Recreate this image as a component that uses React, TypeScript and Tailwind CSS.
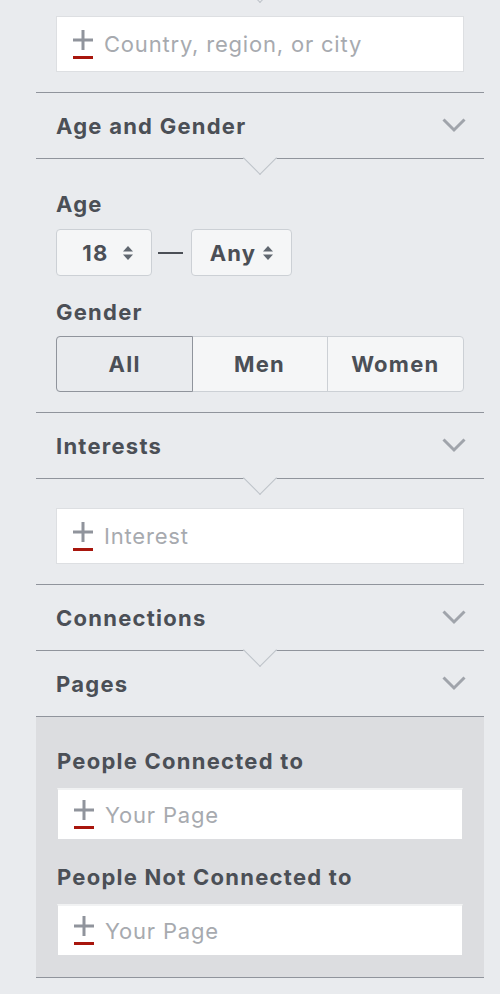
import React from 'react'

const PlusMark: React.FC = () => (
  <svg width="20" height="29" viewBox="0 0 20 29" className="shrink-0">
    <path d="M10 0 V20 M0 10 H20" stroke="#90949c" strokeWidth="3" />
    <rect x="0" y="26" width="20" height="3" fill="#a8160d" />
  </svg>
)

const Chevron: React.FC = () => (
  <svg width="24" height="15" viewBox="0 0 24 15">
    <path d="M1.5 1.5 L12 12 L22.5 1.5" fill="none" stroke="#a0a4ab" strokeWidth="3" />
  </svg>
)

const Spinner: React.FC = () => (
  <svg width="12" height="16" viewBox="0 0 12 16" className="shrink-0">
    <path d="M6 1 L11 6.5 H1 Z" fill="#606770" />
    <path d="M6 15 L11 9.5 H1 Z" fill="#606770" />
  </svg>
)

const Notch: React.FC<{ top?: boolean }> = ({ top }) => (
  <div
    className={`absolute left-1/2 z-10 h-[24px] w-[24px] -translate-x-1/2 rotate-45 border-b border-r border-[#bec3c9] bg-[#e9ebee] ${
      top ? 'top-[-26px]' : 'bottom-[-12px]'
    }`}
  ></div>
)

const SearchInput: React.FC<{ placeholder: string; tall?: boolean }> = ({ placeholder, tall }) => (
  <div
    className={`flex items-center gap-[11px] bg-white px-[16px] ${
      tall ? 'h-[56px] border border-[#dddfe2]' : 'h-[52px] border border-[#dcdde0] border-t-2 border-t-[#f1f2f3]'
    }`}
  >
    <PlusMark />
    <span className="text-[22px] tracking-[0.8px] text-[#a7aaaf]">{placeholder}</span>
  </div>
)

const Header: React.FC<{ title: string; notch?: boolean }> = ({ title, notch }) => (
  <div className="relative flex h-[66px] items-center justify-between border-b border-[#90949c] pl-[20px] pr-[18px]">
    <span className="text-[22px] font-bold">{title}</span>
    <Chevron />
    {notch && <Notch />}
  </div>
)

const App: React.FC = () => {
  return (
    <div className="min-h-screen overflow-hidden bg-[#e9ebee] font-['Inter',sans-serif] leading-[28px] tracking-[1.25px] text-[#4b4f56]">
      <div className="ml-[36px] mr-[16px]">
        <div className="relative border-b border-[#90949c] px-[20px] pb-[20px] pt-[16px]">
          <Notch top />
          <SearchInput placeholder="Country, region, or city" tall />
        </div>

        <Header title="Age and Gender" notch />
        <div className="border-b border-[#90949c] px-[20px] pb-[20px] pt-[31px]">
          <div className="text-[22px] font-bold">Age</div>
          <div className="mt-[11px] flex items-center">
            <div className="flex h-[47px] w-[96px] items-center rounded-[4px] border border-[#ccd0d5] bg-[#f5f6f7] pl-[12px] pr-[17px]">
              <span className="flex-1 text-center text-[22px] font-bold">18</span>
              <Spinner />
            </div>
            <div className="ml-[6px] mr-[8px] h-[2px] w-[25px] bg-[#4b4f56]"></div>
            <div className="flex h-[47px] w-[101px] items-center rounded-[4px] border border-[#ccd0d5] bg-[#f5f6f7] pl-[12px] pr-[17px]">
              <span className="flex-1 text-center text-[22px] font-bold">Any</span>
              <Spinner />
            </div>
          </div>
          <div className="mt-[22px] text-[22px] font-bold">Gender</div>
          <div className="mt-[10px] grid h-[56px] grid-cols-3 rounded-[4px] border border-[#ccd0d5] bg-[#f5f6f7]">
            <div className="m-[-1px] flex items-center justify-center rounded-l-[4px] border border-[#90949c] bg-[#e9ebee] text-[22px] font-bold">
              All
            </div>
            <div className="flex items-center justify-center border-r border-[#ccd0d5] text-[22px] font-bold">Men</div>
            <div className="flex items-center justify-center text-[22px] font-bold">Women</div>
          </div>
        </div>

        <Header title="Interests" notch />
        <div className="border-b border-[#90949c] px-[20px] pb-[20px] pt-[29px]">
          <SearchInput placeholder="Interest" tall />
        </div>

        <Header title="Connections" notch />
        <Header title="Pages" />
        <div className="border-b border-[#90949c] bg-[#dcdde0] px-[21px] pb-[21px] pt-[30px]">
          <div className="text-[22px] font-bold">People Connected to</div>
          <div className="mt-[13px]">
            <SearchInput placeholder="Your Page" />
          </div>
          <div className="mt-[23px] text-[22px] font-bold">People Not Connected to</div>
          <div className="mt-[13px]">
            <SearchInput placeholder="Your Page" />
          </div>
        </div>
      </div>
    </div>
  )
}

export default App
